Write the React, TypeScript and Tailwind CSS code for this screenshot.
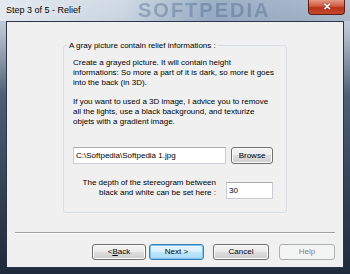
import React from "react";

const font = { fontFamily: '"Liberation Sans", Arial, sans-serif' };

function WizButton({
  children,
  isDefault,
  disabled,
  width,
}: {
  children: React.ReactNode;
  isDefault?: boolean;
  disabled?: boolean;
  width: string;
}) {
  const base =
    "flex h-[16px] items-center justify-center rounded-[3px] border text-[8px] leading-none";
  if (disabled) {
    return (
      <div className={`${base} ${width} border-[#adb2b5] bg-[#f4f4f4] text-[#838383]`}>
        {children}
      </div>
    );
  }
  if (isDefault) {
    return (
      <div
        className={`${base} ${width} border-[#3c7fb1] bg-[linear-gradient(180deg,#eaf6fd_0%,#d9f0fc_50%,#bee6fd_50%,#a7d9f5_100%)] text-black shadow-[inset_0_0_0_1px_#7ec4ee]`}
      >
        {children}
      </div>
    );
  }
  return (
    <div
      className={`${base} ${width} border-[#707070] bg-[linear-gradient(180deg,#f2f2f2_0%,#ebebeb_50%,#dddddd_50%,#cfcfcf_100%)] text-black shadow-[inset_0_0_0_1px_#fcfcfc]`}
    >
      {children}
    </div>
  );
}

export default function App() {
  return (
    <div
      className="flex h-[274px] w-[350px] flex-col bg-[linear-gradient(180deg,#d6dee6_0%,#b3bfcc_12%,#4d5e75_35%,#2c394c_80%,#1f2a3a_100%)]"
      style={font}
    >
      {/* Title bar */}
      <div className="relative h-[21px] overflow-hidden bg-[linear-gradient(90deg,rgba(228,234,240,0.95)_0%,rgba(205,216,228,0.6)_35%,rgba(110,140,175,0.55)_60%,rgba(120,145,175,0.5)_85%,rgba(140,155,175,0.4)_100%)]">
        <span className="absolute left-[6px] top-[5px] text-[9px] leading-[11px] text-black [text-shadow:0_0_6px_#ffffff]">
          Step 3 of 5 - Relief
        </span>
        <span className="absolute left-[138px] top-0 text-[20px] font-bold leading-[21px] tracking-[2px] text-[rgba(60,90,130,0.35)] [filter:blur(0.7px)]">
          SOFTPEDIA
        </span>
        <div className="absolute left-[308px] top-0 flex h-[15px] w-[37px] items-center justify-center rounded-b-[4px] border border-t-0 border-[#5a2016] bg-[linear-gradient(180deg,#e49a87_0%,#d0573d_45%,#b8321a_55%,#c54a2c_100%)]">
          <span className="text-[10px] font-bold leading-none text-white [text-shadow:0_0_2px_#5a2016]">
            ✕
          </span>
        </div>
      </div>

      {/* Client area */}
      <div className="mx-[6px] mb-[6px] flex flex-1 flex-col border border-[#2a3547] bg-[#f0f0f0]">
        <div className="pt-[23px] pl-[56px]">
          <div className="relative h-[168px] w-[224px] rounded-[3px] border border-[#d5dfe5] pl-[9px] pt-[12px] text-[8px] leading-[10px] text-black">
            <span className="absolute left-[4px] top-[-6px] bg-[#f0f0f0] px-[1px] leading-[11px]">
              A gray picture contain relief informations :
            </span>
            <p className="whitespace-nowrap">
              Create a grayed picture. It will contain height
              <br />
              informations: So more a part of it is dark, so more it goes
              <br />
              into the back (in 3D).
            </p>
            <p className="mt-[9px] whitespace-nowrap">
              If you want to used a 3D image, I advice you to remove
              <br />
              all the lights, use a black background, and texturize
              <br />
              objets with a gradient image.
            </p>
            <div className="mt-[20px] flex">
              <div className="flex h-[17px] w-[153px] items-center border border-[#c9ccd2] border-t-[#abadb3] bg-white pl-[2px]">
                C:\Softpedia\Softpedia 1.jpg
              </div>
              <div className="ml-[5px]">
                <div className="flex h-[17px] w-[42px] items-center justify-center rounded-[3px] border border-[#707070] bg-[linear-gradient(180deg,#f2f2f2_0%,#ebebeb_50%,#dddddd_50%,#cfcfcf_100%)] shadow-[inset_0_0_0_1px_#fcfcfc]">
                  Browse
                </div>
              </div>
            </div>
            <div className="mt-[14px] flex items-start">
              <div className="w-[143px] whitespace-nowrap text-right">
                The depth of the stereogram between
                <br />
                black and white can be set here :
              </div>
              <div className="ml-[10px] mt-[4px] flex h-[17px] w-[47px] items-center border border-[#c9ccd2] border-t-[#abadb3] bg-white pl-[2px]">
                30
              </div>
            </div>
          </div>
        </div>

        <div className="mx-[8px] mt-[19px] h-[2px] border-t border-[#a0a0a0] bg-white" />

        <div className="mt-[10px] flex pl-[85px]">
          <WizButton width="w-[54px]">
            &lt; <span className="underline">B</span>ack
          </WizButton>
          <div className="ml-[3px]">
            <WizButton width="w-[55px]" isDefault>
              Next &gt;
            </WizButton>
          </div>
          <div className="ml-[9px]">
            <WizButton width="w-[56px]">Cancel</WizButton>
          </div>
          <div className="ml-[10px]">
            <WizButton width="w-[56px]" disabled>
              Help
            </WizButton>
          </div>
        </div>
      </div>
    </div>
  );
}
